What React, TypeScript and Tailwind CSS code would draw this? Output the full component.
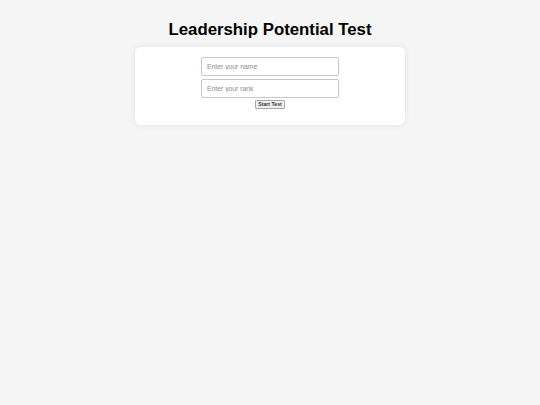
import React from "react";

const App: React.FC = () => {
  return (
    <div
      className="min-h-screen bg-[#f5f5f5] flex flex-col items-center"
      style={{ fontFamily: '"Liberation Sans", Arial, sans-serif' }}
    >
      <h1 className="mt-[20px] text-[16.8px] leading-[20px] font-bold text-black">
        Leadership Potential Test
      </h1>

      {/* Form card */}
      <div className="mt-[7px] w-[270px] h-[78px] bg-white rounded-[6px] shadow-[0_0_6px_rgba(0,0,0,0.08)] flex flex-col items-center pt-[10px]">
        <input
          type="text"
          placeholder="Enter your name"
          className="w-[138px] h-[19px] px-[5px] border border-[#c8c8c8] rounded-[2px] text-[6.8px] text-[#333] outline-none placeholder:text-[#8c8c8c]"
        />
        <input
          type="text"
          placeholder="Enter your rank"
          className="mt-[3px] w-[138px] h-[19px] px-[5px] border border-[#c8c8c8] rounded-[2px] text-[6.8px] text-[#333] outline-none placeholder:text-[#8c8c8c]"
        />
        <button className="mt-[2px] w-[30px] h-[9px] flex items-center justify-center bg-[#efefef] border border-[#a8a8a8] rounded-[1px] text-[5.2px] leading-none font-semibold text-[#333]">
          Start Test
        </button>
      </div>
    </div>
  );
};

export default App;
